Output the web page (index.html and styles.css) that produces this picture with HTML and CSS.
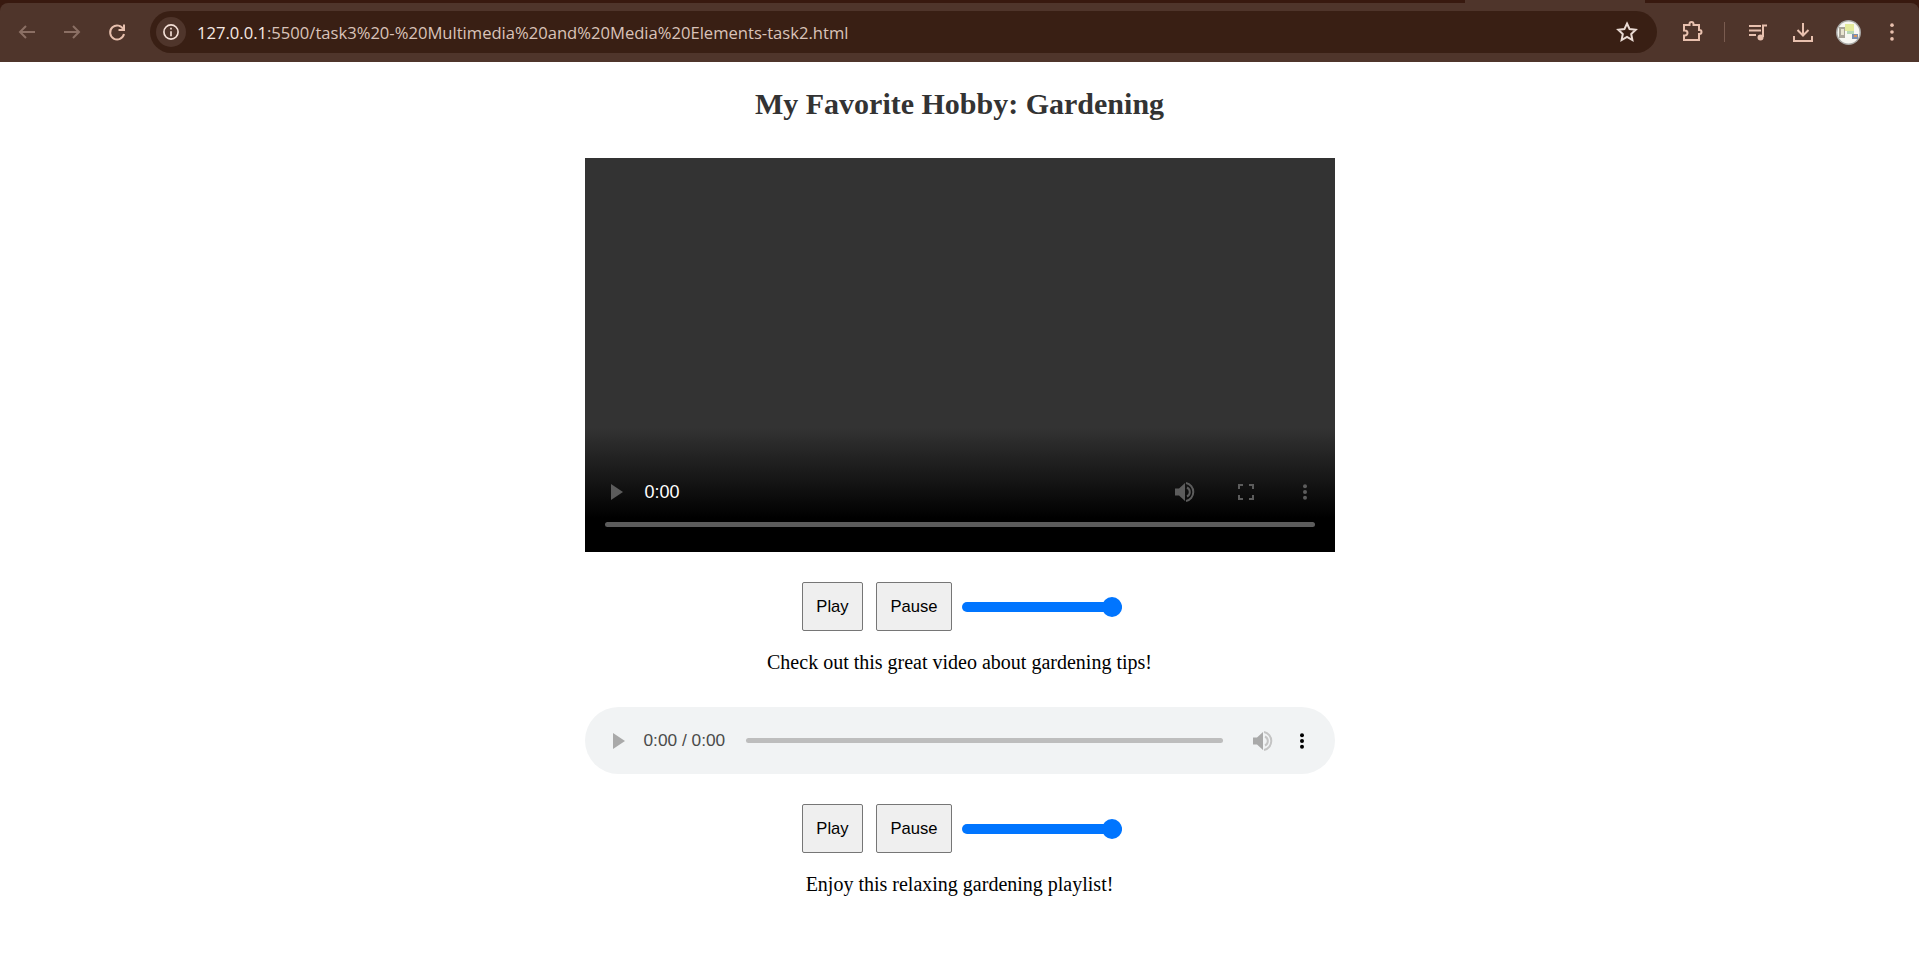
FILE: index.html
```html
<!DOCTYPE html>
<html lang="en">
<head>
  <meta charset="UTF-8">
  <meta name="viewport" content="width=device-width, initial-scale=1.0">
  <title>My Favorite Hobby: Gardening</title>
  <link rel="stylesheet" href="styles.css">
</head>
<body>
  <div class="browser-bar">
    <div class="tab-strip">
      <span class="active-tab"></span>
    </div>
    <div class="toolbar">
      <svg class="tool-icon dim" viewBox="0 0 24 24"><path d="M20 12H5M11 6l-6 6 6 6"/></svg>
      <svg class="tool-icon dim" viewBox="0 0 24 24"><path d="M4 12h15M13 6l6 6-6 6"/></svg>
      <svg class="tool-icon" viewBox="0 0 24 24"><path d="M18.500 9.500A7 7 0 1 0 19 14"/><path d="M19 4.500v5.500h-5.500"/></svg>
      <div class="address-bar">
        <span class="site-info">
          <svg viewBox="0 0 24 24"><circle cx="12" cy="12" r="8.500"/><path d="M12 11v6M12 7v2"/></svg>
        </span>
        <span class="url">127.0.0.1<span class="url-rest">:5500/task3%20-%20Multimedia%20and%20Media%20Elements-task2.html</span></span>
        <svg class="star" viewBox="0 0 24 24"><path d="M12 3.500l2.600 5.600 6.100.7-4.500 4.200 1.200 6-5.400-3-5.400 3 1.200-6-4.500-4.200 6.100-.7z"/></svg>
      </div>
      <svg class="tool-icon ext" viewBox="0 0 24 24"><path d="M4 5h5.500V4a2 2 0 0 1 4 0v1H19v5h.500a2 2 0 0 1 0 4H19v6H4v-4.500h1a2.500 2.500 0 0 0 0-5H4z"/></svg>
      <span class="divider"></span>
      <svg class="tool-icon media" viewBox="0 0 24 24"><path d="M3 6h12M3 10.500h12M3 15h7"/><path d="M17 17V5.500h4"/><circle class="solid" cx="14.500" cy="17.500" r="3"/></svg>
      <svg class="tool-icon download" viewBox="0 0 24 24"><path d="M12 3v12M6.500 10l5.500 5.500 5.500-5.500M3 16v5h18v-5"/></svg>
      <svg class="avatar" viewBox="0 0 25 25">
        <circle cx="12.500" cy="12.500" r="12.500" fill="#a9a9a6"/>
        <circle cx="12.500" cy="12.500" r="11" fill="#f7f7f2"/>
        <rect x="3" y="7" width="6" height="11" fill="#a8a498"/>
        <rect x="5" y="9" width="3" height="6" fill="#e8e4d0"/>
        <rect x="9" y="4" width="9" height="7" fill="#e3ea9c"/>
        <rect x="11" y="11" width="7" height="3" fill="#b7d8b4"/>
        <rect x="16" y="14" width="6" height="5" fill="#7b8fb0"/>
        <rect x="18" y="15" width="3" height="2" fill="#d9965a"/>
      </svg>
      <svg class="tool-icon menu" viewBox="0 0 24 24"><circle cx="12" cy="4.500" r="2"/><circle cx="12" cy="12" r="2"/><circle cx="12" cy="19.500" r="2"/></svg>
    </div>
  </div>

  <main class="page">
    <h1 class="title">My Favorite Hobby: Gardening</h1>

    <div class="video-player">
      <div class="video-controls">
        <svg class="play-icon" viewBox="0 0 12 16"><path d="M0 0l12 8-12 8z"/></svg>
        <span class="video-time">0:00</span>
        <svg class="video-volume" viewBox="0 0 20 20"><path d="M0 6.500h4l6-5.500v18l-6-5.500H0z"/><path d="M12 5.500a5 5 0 0 1 0 9" class="wave"/><path d="M11 1a9.200 9.200 0 0 1 0 18" class="wave"/></svg>
        <svg class="video-full" viewBox="0 0 16 16"><path d="M1 5V1h4M11 1h4v4M15 11v4h-4M5 15H1v-4"/></svg>
        <svg class="video-more" viewBox="0 0 6 16"><circle cx="3" cy="2.200" r="2"/><circle cx="3" cy="8" r="2"/><circle cx="3" cy="13.800" r="2"/></svg>
      </div>
      <div class="video-track"></div>
    </div>

    <div class="controls">
      <button class="btn">Play</button>
      <button class="btn">Pause</button>
      <span class="slider"><span class="slider-thumb"></span></span>
    </div>
    <p class="caption">Check out this great video about gardening tips!</p>

    <div class="audio-player">
      <svg class="audio-play" viewBox="0 0 12 16"><path d="M0 0l12 8-12 8z"/></svg>
      <span class="audio-time">0:00 / 0:00</span>
      <span class="audio-track"></span>
      <svg class="audio-volume" viewBox="0 0 20 20"><path d="M0 6.500h4l6-5.500v18l-6-5.500H0z"/><path d="M12 5.500a5 5 0 0 1 0 9" class="wave"/><path d="M11 1a9.200 9.200 0 0 1 0 18" class="wave"/></svg>
      <svg class="audio-more" viewBox="0 0 6 16"><circle cx="3" cy="2.200" r="2"/><circle cx="3" cy="8" r="2"/><circle cx="3" cy="13.800" r="2"/></svg>
    </div>

    <div class="controls">
      <button class="btn">Play</button>
      <button class="btn">Pause</button>
      <span class="slider"><span class="slider-thumb"></span></span>
    </div>
    <p class="caption">Enjoy this relaxing gardening playlist!</p>
  </main>
</body>
</html>
```

FILE: styles.css
```css
* {
  box-sizing: border-box;
}

body {
  margin: 0;
  background: #fff;
  font-family: "Liberation Serif", serif;
  color: #000;
}

.browser-bar {
  height: 62px;
  background: #38190f;
  display: flex;
  flex-direction: column;
}

.tab-strip {
  height: 3px;
  padding-left: 1465px;
}

.active-tab {
  display: block;
  width: 180px;
  height: 3px;
  background: #4f352b;
}

.toolbar {
  flex: 1;
  display: flex;
  align-items: center;
  padding: 0 0 1px 15px;
  background: #4f352b;
  border-radius: 8px 8px 0 0;
}

.tool-icon {
  width: 24px;
  height: 24px;
  fill: none;
  stroke: #e8c0ae;
  stroke-width: 2;
  flex: none;
  margin-right: 21px;
}

.tool-icon.dim {
  stroke: #8b6f64;
}

.address-bar {
  width: 1507px;
  height: 42px;
  flex: none;
  background: #391f14;
  border-radius: 21px;
  display: flex;
  align-items: center;
  padding: 0 18px 0 6px;
}

.site-info {
  width: 30px;
  height: 30px;
  border-radius: 50%;
  background: #4f352b;
  display: flex;
  align-items: center;
  justify-content: center;
  margin-right: 11px;
}

.site-info svg {
  width: 20px;
  height: 20px;
  fill: none;
  stroke: #f3dfd6;
  stroke-width: 2;
}

.url {
  flex: 1;
  font-family: "Open Sans", sans-serif;
  font-size: 16.6px;
  color: #f6e9e3;
  white-space: nowrap;
}

.url-rest {
  color: #d9c3b9;
}

.star {
  width: 24px;
  height: 24px;
  fill: none;
  stroke: #eadbd4;
  stroke-width: 2;
}

.tool-icon.ext {
  margin-left: 23px;
  margin-right: 20px;
}

.divider {
  width: 1px;
  height: 20px;
  flex: none;
  background: #7a5c50;
  margin-right: 21px;
}

.tool-icon .solid {
  fill: #e8c0ae;
  stroke: none;
}

.avatar {
  width: 25px;
  height: 25px;
  flex: none;
  margin-right: 20px;
}

.tool-icon.menu {
  fill: #e8c0ae;
  stroke: none;
  width: 22px;
  height: 22px;
  margin-right: 0;
}

.page {
  display: flex;
  flex-direction: column;
  align-items: center;
}

.title {
  margin: 25px 0 0;
  font-size: 30px;
  line-height: 34px;
  font-weight: bold;
  color: #333;
}

.video-player {
  width: 750px;
  height: 394px;
  margin-top: 37px;
  background: linear-gradient(#333 0, #333 270px, #000 360px);
  display: flex;
  flex-direction: column;
  justify-content: flex-end;
  padding: 0 20px 25px;
}

.video-controls {
  display: flex;
  align-items: center;
  height: 24px;
  margin-bottom: 18px;
}

.play-icon {
  width: 12px;
  height: 16px;
  fill: #5c5c5c;
  margin-left: 6px;
}

.video-time {
  margin-left: 22px;
  flex: 1;
  font-family: "Liberation Sans", sans-serif;
  font-size: 18px;
  color: #fff;
}

.video-volume {
  width: 20px;
  height: 20px;
  fill: #5c5c5c;
  margin-right: 43px;
}

.video-full {
  width: 16px;
  height: 16px;
  fill: none;
  stroke: #5c5c5c;
  stroke-width: 2;
  margin-right: 48px;
}

.video-more {
  width: 6px;
  height: 16px;
  fill: #5c5c5c;
  margin-right: 7px;
}

.wave {
  fill: none;
  stroke: #5c5c5c;
  stroke-width: 2;
}

.video-track {
  height: 5px;
  border-radius: 3px;
  background: #5c5c5c;
}

.controls {
  display: flex;
  align-items: center;
  margin-top: 30px;
  height: 49px;
  padding-left: 5px;
}

.btn {
  height: 49px;
  width: 61px;
  padding: 0;
  margin-right: 13px;
  background: #efefef;
  border: 1px solid #767676;
  border-radius: 2px;
  font-family: "Liberation Sans", sans-serif;
  font-size: 16.6px;
  color: #000;
}

.btn + .btn {
  width: 76px;
  margin-right: 10px;
}

.slider {
  width: 160px;
  height: 10px;
  border-radius: 5px;
  background: #0075ff;
  display: flex;
  justify-content: flex-end;
  align-items: center;
}

.slider-thumb {
  width: 20px;
  height: 20px;
  border-radius: 50%;
  background: #0075ff;
}

.caption {
  margin: 20px 0 0;
  font-size: 20px;
  line-height: 23px;
}

.audio-player {
  width: 750px;
  height: 67px;
  margin-top: 33px;
  background: #f1f3f4;
  border-radius: 34px;
  display: flex;
  align-items: center;
  padding: 0 30px 0 28px;
}

.audio-play {
  width: 12px;
  height: 16px;
  fill: #a9a9a9;
  flex: none;
}

.audio-time {
  margin-left: 19px;
  font-family: "Liberation Sans", sans-serif;
  font-size: 17.3px;
  color: #4a4a4a;
  white-space: nowrap;
}

.audio-track {
  flex: 1;
  height: 5px;
  margin: 0 30px 0 21px;
  border-radius: 3px;
  background: #bdbdbd;
}

.audio-volume {
  width: 20px;
  height: 20px;
  fill: #a9a9a9;
  flex: none;
  margin-right: 26px;
}

.audio-volume .wave {
  stroke: #c4c4c4;
}

.audio-more {
  width: 6px;
  height: 16px;
  fill: #000;
  flex: none;
}
```
